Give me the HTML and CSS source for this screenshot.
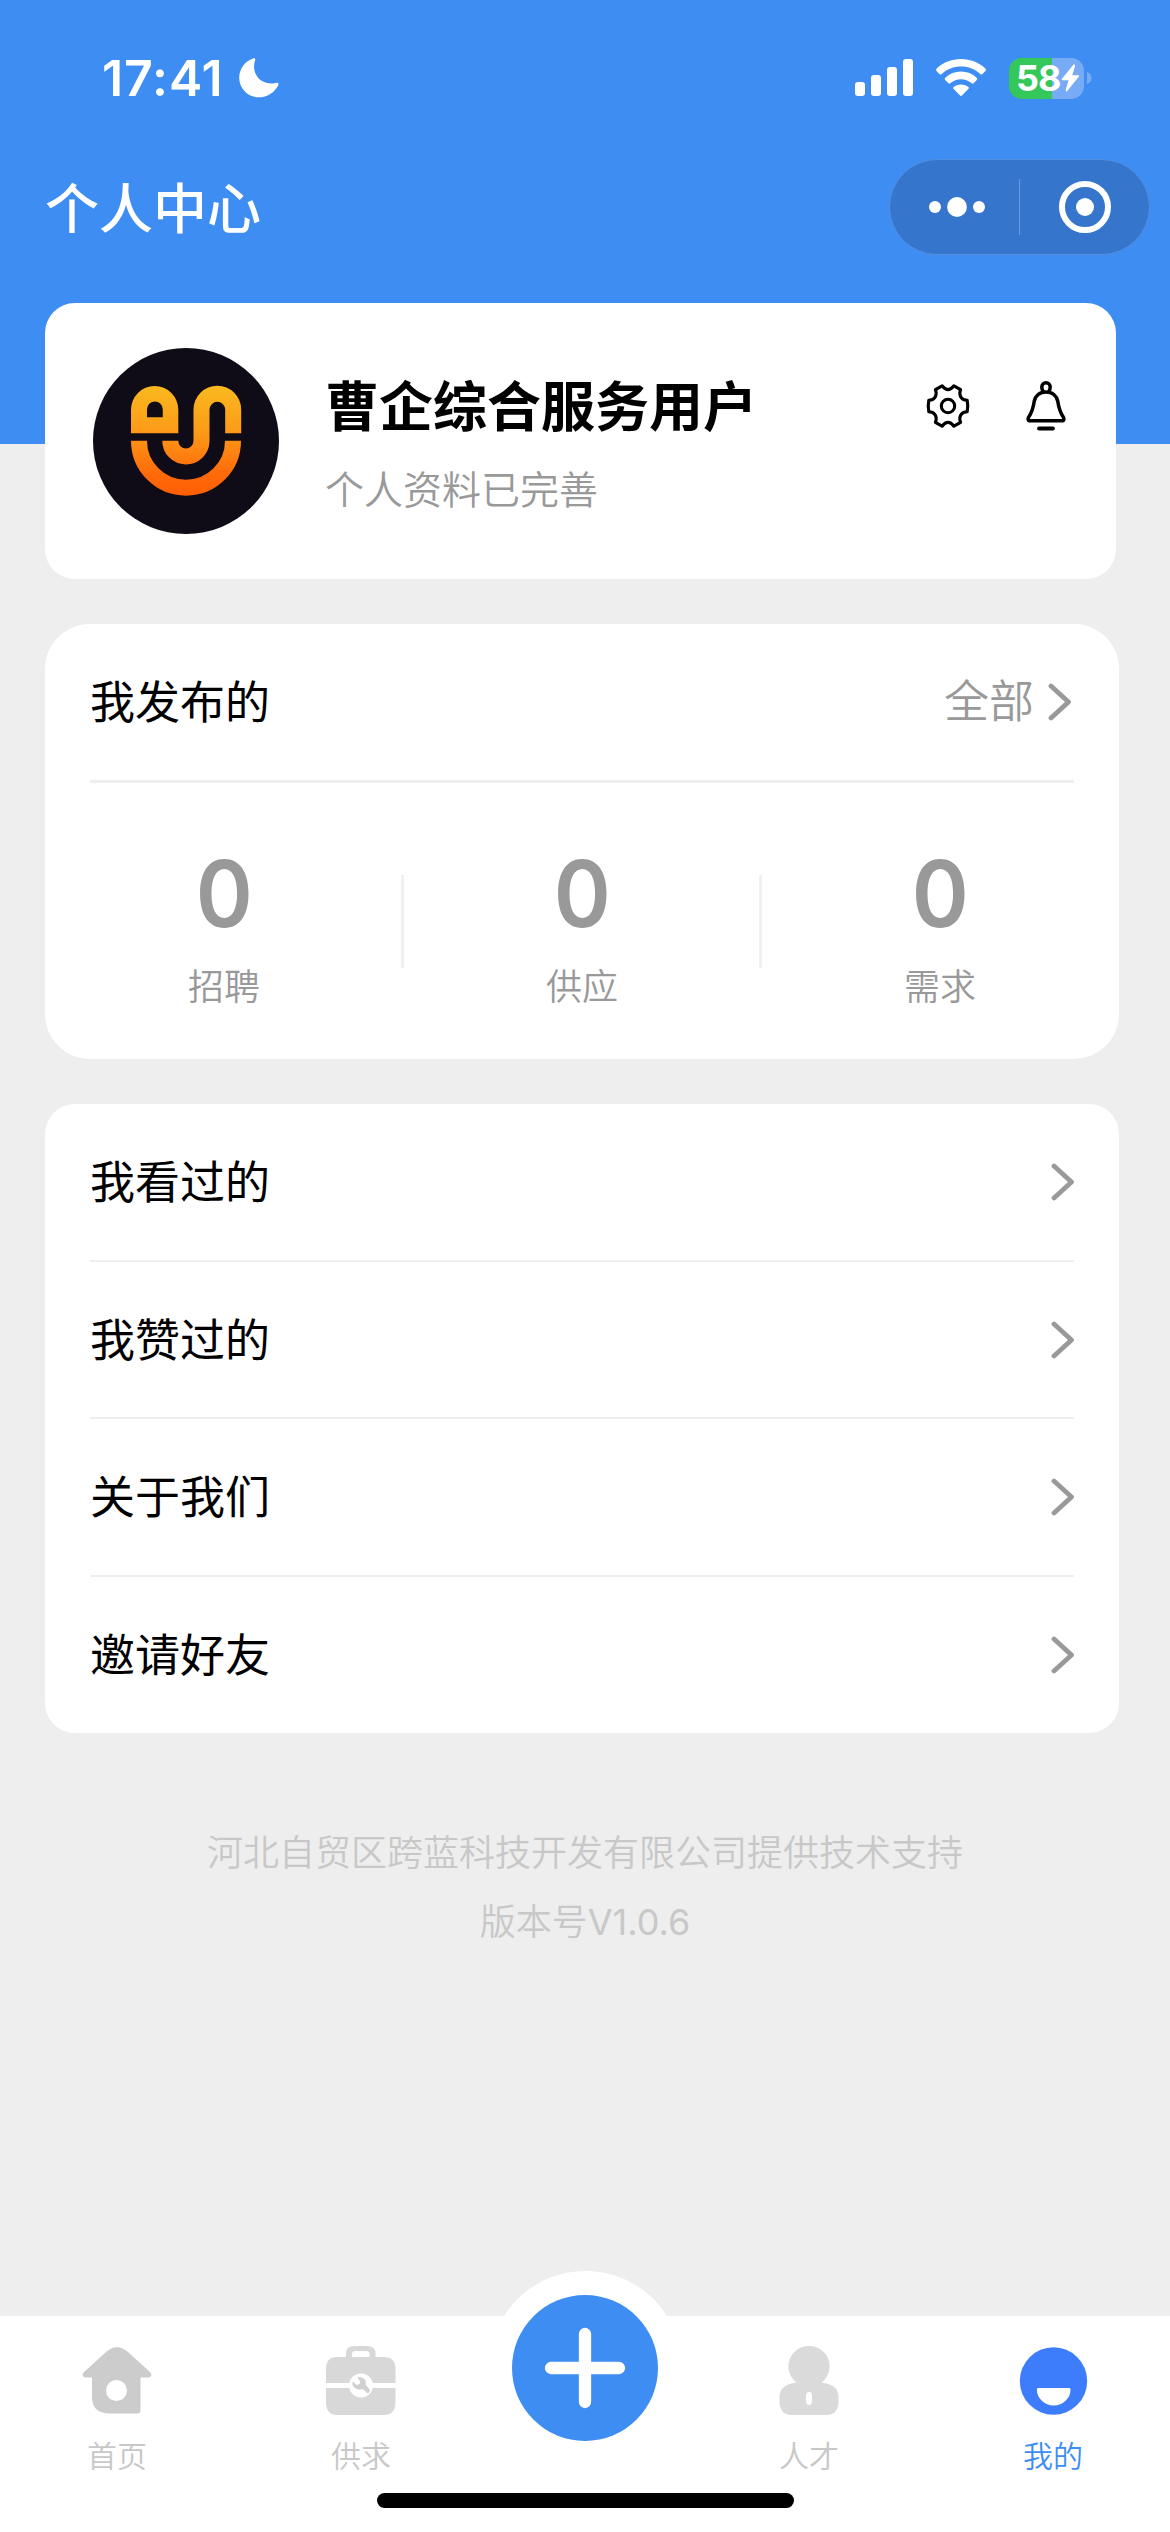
FILE: index.html
```html
<!DOCTYPE html>
<html lang="zh-CN">
<head>
<meta charset="utf-8">
<title>个人中心</title>
<link rel="stylesheet" href="styles.css">
</head>
<body>
<div class="screen">
  <header class="top">
    <div class="status">
      <div class="status-left">
        <span class="time">17:41</span>
        <svg class="moon" width="40" height="40" viewBox="0 0 40 40"><path d="M14.2.4C16 0 16.6 1.2 16 2.6C12 15 21 27.5 35.5 25.2C36.6 25 38 24.400 38.800 24.800C39.700 25.300 39.500 26.300 39.100 27.400C35.500 34.500 28 39.300 20 39.300C9 39.300.2 30.500.2 19.700C.2 11 6 2.800 14.200.4Z" fill="#fff"/></svg>
      </div>
      <div class="status-right">
        <svg class="signal" width="58" height="38" viewBox="0 0 58 38" fill="#fff"><rect y="23" width="10" height="14" rx="3"/><rect x="16" y="16" width="10" height="21" rx="3"/><rect x="32" y="8" width="10" height="29" rx="3"/><rect x="48" width="10" height="37" rx="3"/></svg>
        <svg class="wifi" width="50" height="38" viewBox="0 0 50 38" fill="#fff"><path d="M25 0C34.500 0 43 3.500 49.300 9.400Q50.600 10.700 49.400 12L46.600 15Q45.500 16 44.300 14.900C39 10.200 32.500 7.600 25 7.600S11 10.200 5.700 14.900Q4.500 16 3.400 15L.6 12Q-.6 10.700.7 9.400C7 3.500 15.500 0 25 0Z"/><path d="M25 12.600C31 12.600 36.500 14.800 40.700 18.700Q41.800 19.800 40.800 20.900L37.600 24.200Q36.600 25.100 35.400 24.100C32.500 21.700 29 20.300 25 20.300S17.500 21.700 14.600 24.100Q13.400 25.100 12.400 24.200L9.200 20.900Q8.200 19.800 9.300 18.700C13.500 14.800 19 12.600 25 12.600Z"/><path d="M25 25.400C28 25.400 30.500 26.400 32.400 27.900Q33.400 28.800 32.500 29.800L26.200 36.300Q25 37.500 23.800 36.300L17.500 29.800Q16.600 28.800 17.600 27.900C19.500 26.400 22 25.400 25 25.400Z"/></svg>
        <div class="battery">
          <div class="battery-body"><span class="battery-num">58</span><svg width="19" height="28" viewBox="0 0 19 28"><path d="M12.600.6L.8 15Q.2 16.200 1.400 16.300H7.600L4.600 26.300Q4.600 27.900 6 27.200L18 12.500Q18.500 11.400 17.300 11.300H11.200L14.200 1.400Q14 0 12.600.6Z" fill="#fff"/></svg></div>
          <svg width="5" height="12" viewBox="0 0 5 12"><path d="M0 0Q4.500 1.500 4.500 6T0 12Z" fill="#78abf6"/></svg>
        </div>
      </div>
    </div>
    <div class="nav">
      <h1 class="title">个人中心</h1>
      <div class="capsule">
        <svg class="dots" width="56" height="20" viewBox="0 0 56 20" fill="#fff"><circle cx="6" cy="10" r="6"/><circle cx="28" cy="10" r="9.900"/><circle cx="50" cy="10" r="6"/></svg>
        <span class="capsule-line"></span>
        <svg class="target" width="52" height="52" viewBox="0 0 52 52"><circle cx="26" cy="26" r="23" fill="none" stroke="#fff" stroke-width="6"/><circle cx="26" cy="26" r="9" fill="#fff"/></svg>
      </div>
    </div>
  </header>

  <main class="content">
    <section class="card profile">
      <svg class="avatar" width="186" height="186" viewBox="0 0 186 186">
        <defs><linearGradient id="logo" gradientUnits="userSpaceOnUse" x1="0" y1="38" x2="0" y2="148"><stop offset="0" stop-color="#f9b91f"/><stop offset=".42" stop-color="#fd9a18"/><stop offset=".8" stop-color="#ff6a0a"/><stop offset="1" stop-color="#ff5f00"/></linearGradient></defs>
        <circle cx="93" cy="93" r="93" fill="#0f0c18"/>
        <path fill="url(#logo)" fill-rule="evenodd" d="M38 85.300V61.700a23.650 23.650 0 0 1 47.300 0V85.300ZM54 69.300H69.800V61.300a7.900 7.900 0 0 0-15.800 0Z"/>
        <path fill="none" stroke="url(#logo)" stroke-width="16" d="M140.200 85.300V61.700A15.850 15.850 0 0 0 108.500 61.700V93A15.600 15.600 0 0 1 77.300 92.700M46 92.700A47 47 0 0 0 140 92.700"/>
      </svg>
      <div class="profile-body">
        <div class="profile-head">
          <h2 class="name">曹企综合服务用户</h2>
          <div class="actions">
            <svg width="44" height="46" viewBox="-22 -23 44 46" fill="none" stroke="#000" stroke-width="3.100" stroke-linejoin="round"><circle r="6.700"/><path d="M-5.900-20.200Q-3-16.400 0-16.400T5.900-20.200L12.600-16.300C10.500-11.500 12.500-6 19.200-5.600Q20.300 0 19.200 5.600C12.500 6 10.500 11.500 12.600 16.300L5.900 20.200Q3 16.400 0 16.400T-5.900 20.200L-12.600 16.300C-10.500 11.500-12.500 6-19.200 5.600Q-20.300 0-19.200-5.600C-12.500-6-10.500-11.500-12.600-16.300Z"/></svg>
            <svg width="40" height="50" viewBox="0 0 40 50" fill="none" stroke="#000" stroke-width="3.500" stroke-linecap="round" stroke-linejoin="round"><path d="M17 10Q15.800 8.500 15.800 6A4.200 4.200 0 0 1 24.200 6Q24.200 8.500 23 10"/><path d="M20 11C27 11 30.700 15.500 31.700 20C32.800 27 34 31.500 37.400 36.200Q38.600 39.400 37 39.700H3Q1.400 39.400 2.600 36.200C6 31.500 7.200 27 8.300 20C9.300 15.500 13 11 20 11Z"/><path d="M13 47.500H27" stroke-width="3.800"/></svg>
          </div>
        </div>
        <p class="sub">个人资料已完善</p>
      </div>
    </section>

    <section class="card published">
      <div class="row published-head">
        <span class="row-title">我发布的</span>
        <span class="more"><span>全部</span><svg class="chev" width="24" height="38" viewBox="0 0 24 38"><path d="M3 3L20.500 19L3 35"/></svg></span>
      </div>
      <div class="stats">
        <div class="stat"><b class="num">0</b><span class="label">招聘</span></div>
        <div class="stat"><b class="num">0</b><span class="label">供应</span></div>
        <div class="stat"><b class="num">0</b><span class="label">需求</span></div>
      </div>
    </section>

    <section class="card menu">
      <div class="row"><span class="row-title">我看过的</span><svg class="chev" width="24" height="38" viewBox="0 0 24 38"><path d="M3 3L20.500 19L3 35"/></svg></div>
      <div class="row"><span class="row-title">我赞过的</span><svg class="chev" width="24" height="38" viewBox="0 0 24 38"><path d="M3 3L20.500 19L3 35"/></svg></div>
      <div class="row"><span class="row-title">关于我们</span><svg class="chev" width="24" height="38" viewBox="0 0 24 38"><path d="M3 3L20.500 19L3 35"/></svg></div>
      <div class="row"><span class="row-title">邀请好友</span><svg class="chev" width="24" height="38" viewBox="0 0 24 38"><path d="M3 3L20.500 19L3 35"/></svg></div>
    </section>

    <footer class="credits">
      <p>河北自贸区跨蓝科技开发有限公司提供技术支持</p>
      <p>版本号<span class="version">V1.0.6</span></p>
    </footer>
  </main>

  <nav class="tabs">
    <a class="tab">
      <svg width="70" height="70" viewBox="0 0 70 70"><path fill="#ccc" fill-rule="evenodd" d="M24 6Q35-3.500 46 6L68.500 26.500Q71 31 66.500 31.500H58.500V64Q58.500 67.500 55 67.500H26Q10 66.500 10 51V31.500H3.500Q-1 31 1.500 26.500ZM34.500 34A10.500 10.500 0 1 0 34.500 55A10.500 10.500 0 1 0 34.500 34Z"/></svg>
      <span>首页</span>
    </a>
    <a class="tab">
      <svg width="70" height="70" viewBox="0 0 70 70"><g fill="#d8d8d8"><path fill-rule="evenodd" d="M20 11V8Q20 0 28 0H41Q49.500 0 49.500 8V11H58Q69 11 69.500 22V37H0V22Q.5 11 11 11ZM26 11H43.500V8Q43.500 5 40 5H29.500Q26 5 26 8Z"/><path d="M0 42H69.500V57Q69 69 58 69H11Q.5 69 0 57Z"/></g><circle cx="35" cy="39.500" r="12" fill="#fff"/><path fill="#d0d0d0" d="M31 31.500Q37.500 30 39.600 35Q40 37 39.600 39L43.700 43.500Q44.200 46.500 41.500 47.300L37 43Q31 45 27 40Q26 37.500 26.700 35.500L30.500 39Q34 39 34.300 35.600Z"/></svg>
      <span>供求</span>
    </a>
    <a class="fab"><svg width="146" height="146" viewBox="0 0 146 146"><circle cx="73" cy="73" r="73" fill="#3e8df3"/><path d="M73 39V107M39 73H107" stroke="#fff" stroke-width="12.300" stroke-linecap="round"/></svg></a>
    <a class="tab">
      <svg width="70" height="70" viewBox="0 0 70 70"><path fill="#dadada" fill-rule="evenodd" d="M35 0A20.300 20.300 0 0 1 47.500 36.500Q64.500 38.500 64.500 51V56Q64 68 54 69H16Q6 68 5.500 56V51Q5.500 38.500 22.500 36.500A20.300 20.300 0 0 1 35 0ZM32 50V55Q32 59 35 59T38 55V50Q38 46 35 46T32 50Z"/></svg>
      <span>人才</span>
    </a>
    <a class="tab active">
      <svg width="70" height="70" viewBox="0 0 70 70"><circle cx="35.500" cy="35" r="33.700" fill="#3d7dfc"/><path d="M20 42H51.500Q52.500 42 52.500 43.500A16.800 16 0 0 1 18.900 43.500Q18.900 42 20 42Z" fill="#fff"/></svg>
      <span>我的</span>
    </a>
    <div class="home-indicator"></div>
  </nav>
</div>
</body>
</html>
```
FILE: styles.css
```css
* { box-sizing: border-box; margin: 0; padding: 0; }

body {
  width: 1170px;
  background: #eee;
  font-family: Inter, "Noto Sans CJK SC", sans-serif;
  color: #000;
}

svg { display: block; flex: none; }

.screen {
  display: flex;
  flex-direction: column;
  height: 2532px;
  overflow: hidden;
  background: linear-gradient(#3e8df3 444px, #eee 444px);
}

/* status bar and mini-program navigation */
.status {
  display: flex;
  justify-content: space-between;
  align-items: center;
  height: 156px;
  padding: 0 78px 0 102px;
}
.status-left { display: flex; align-items: center; gap: 17px; }
.time { width: 120px; font-size: 50px; font-weight: 600; line-height: 60px; color: #fff; letter-spacing: .9px; }
.status-right { display: flex; align-items: center; }
.wifi { margin: 0 23px; }
.battery { display: flex; align-items: center; gap: 3px; }
.battery-body {
  display: flex;
  align-items: center;
  gap: 2px;
  width: 75px;
  height: 41px;
  padding-left: 7px;
  border-radius: 13px;
  background: linear-gradient(90deg, #34c759 43px, #78abf6 43px);
}
.battery-num { width: 43px; font-size: 36px; font-weight: 700; line-height: 41px; color: #fff; letter-spacing: -1px; }

.nav {
  display: flex;
  justify-content: space-between;
  align-items: center;
  height: 101px;
  padding: 0 20px 0 45px;
}
.title { padding-top: 7px; font-size: 54px; font-weight: 500; line-height: 80px; color: #fff; }
.capsule {
  display: flex;
  align-items: center;
  width: 261px;
  height: 96px;
  padding-left: 39px;
  border: 1px solid #5590e0;
  border-radius: 48px;
  background: #3675cc;
}
.capsule-line { width: 1px; height: 56px; margin: 0 39px 0 34px; background: #6599e0; }

/* cards */
.content { display: flex; flex-direction: column; padding: 46px 51px 0 45px; flex: 1; }
.card { background: #fff; }

.profile {
  display: flex;
  align-items: center;
  gap: 46px;
  height: 276px;
  margin-right: 3px;
  padding: 0 50px 0 48px;
  border-radius: 30px;
}
.profile-body { flex: 1; padding-top: 14px; }
.profile-head { display: flex; justify-content: space-between; align-items: center; height: 82px; }
.name { padding-top: 2px; font-size: 54px; font-weight: 700; line-height: 80px; }
.actions { display: flex; align-items: center; gap: 56px; padding-bottom: 3px; }
.sub { padding-top: 2px; font-size: 39px; font-weight: 350; line-height: 80px; color: #999; }

.row { display: flex; justify-content: space-between; align-items: center; }
.row-title { padding-top: 2px; font-size: 45px; line-height: 68px; }
.chev path { fill: none; stroke: #999; stroke-width: 4.800; stroke-linecap: round; stroke-linejoin: round; }

.published { height: 435px; margin-top: 45px; padding: 0 45px; border-radius: 45px; }
.published-head { height: 159px; border-bottom: 3px solid #eee; }
.more { display: flex; align-items: center; gap: 14px; margin-right: 2px; font-size: 45px; font-weight: 350; line-height: 68px; color: #999; }
.stats { display: grid; grid-template-columns: 1fr 1fr 1fr; margin: 0 -45px; padding-top: 65px; }
.stat { display: flex; flex-direction: column; align-items: center; height: 166px; position: relative; }
.stat + .stat::before { content: ""; position: absolute; left: -2px; top: 27px; width: 3px; height: 93px; background: #f0f0f0; }
.num { font-size: 92px; font-weight: 560; line-height: 92px; color: #999; transform: scaleX(.94); }
.label { margin-top: 20px; font-size: 36px; font-weight: 350; line-height: 54px; color: #999; }

.menu { display: grid; grid-template-rows: 158px 157px 158px 156px; margin-top: 45px; padding: 0 45px; border-radius: 30px; }
.menu .row:not(:last-child) { border-bottom: 2px solid #eee; }
.menu .chev { margin-right: -1px; }

.credits { padding-top: 86px; text-align: center; font-size: 36px; font-weight: 350; line-height: 69px; color: #c8c8c8; }
.credits p { margin-right: -6px; }
.version { font-weight: 400; }

/* tab bar */
.tabs {
  position: relative;
  display: grid;
  grid-template-columns: 234px 254px 194px 254px 234px;
  height: 216px;
  background: #fff;
}
.tab { display: flex; flex-direction: column; align-items: center; padding-top: 30px; font-size: 30px; font-weight: 350; line-height: 45px; color: #c8c8c8; }
.tab span { margin-top: 18px; }
.active { color: #3e8df3; }
.fab {
  justify-self: center;
  display: flex;
  width: 193px;
  height: 193px;
  margin-top: -45px;
  align-items: center;
  justify-content: center;
  border-radius: 50%;
  background: #fff;
}
.home-indicator {
  position: absolute;
  left: 377px;
  bottom: 24px;
  width: 417px;
  height: 15px;
  border-radius: 8px;
  background: #000;
}
```
